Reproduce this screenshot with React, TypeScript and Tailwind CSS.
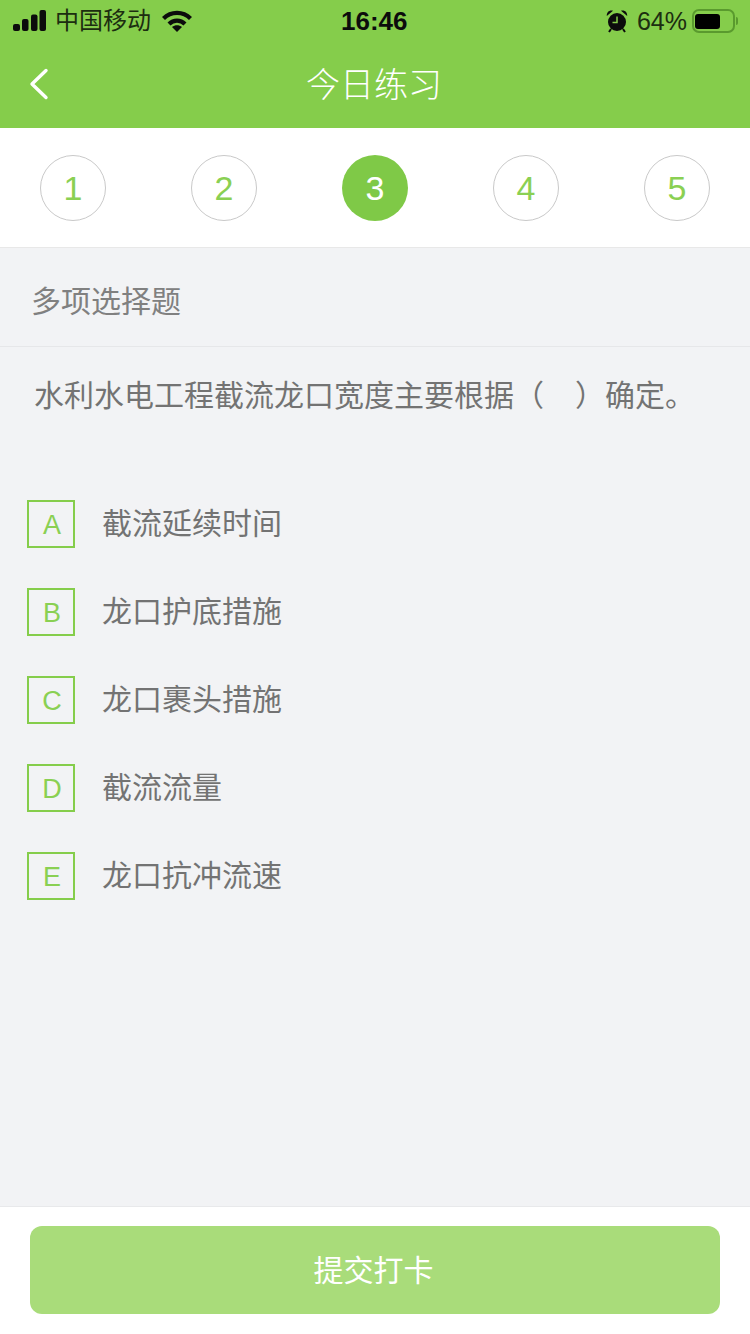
import React from 'react';

const CJK = "font-['Liberation_Sans','Noto_Sans_CJK_SC',sans-serif]";

const steps = [1, 2, 3, 4, 5];

const options = [
    { key: 'A', text: '截流延续时间' },
    { key: 'B', text: '龙口护底措施' },
    { key: 'C', text: '龙口裹头措施' },
    { key: 'D', text: '截流流量' },
    { key: 'E', text: '龙口抗冲流速' },
];

const StatusBar: React.FC = () => (
    <div className="relative flex h-10 items-center justify-between pl-[13px] pr-[12px] pt-[2px] text-black">
        <div className="flex items-center">
            <svg width="34" height="22" viewBox="0 0 34 22" fill="#0c0c0c">
                <rect x="0" y="14" width="7" height="7" rx="2" />
                <rect x="9" y="9" width="6.5" height="12" rx="2" />
                <rect x="18" y="4.5" width="6.5" height="16.5" rx="2" />
                <rect x="26.5" y="0" width="6.5" height="21" rx="2" />
            </svg>
            <span className="ml-[8px] text-[24px] leading-none text-[#1c2e10]">中国移动</span>
            <svg className="ml-[11px]" width="30" height="22" viewBox="0 0 30 22" fill="none" stroke="#0c0c0c" strokeWidth="4.2">
                <path d="M1.5 8.5 C9 1 21 1 28.5 8.5" />
                <path d="M7 14 C11.5 9.5 18.5 9.5 23 14" />
                <path d="M15 22 L10 17 C13 14.8 17 14.8 20 17 Z" fill="#0c0c0c" stroke="none" />
            </svg>
        </div>
        <span className="absolute left-[341px] top-[6px] text-[26px] font-semibold leading-[30px] text-[#0c0c0c]">16:46</span>
        <div className="flex items-center">
            <svg width="22" height="24" viewBox="0 0 22 24">
                <circle cx="11" cy="13" r="9" fill="#0c0c0c" />
                <path d="M11 7.5 V13.5 H6.5" fill="none" stroke="#85cd4b" strokeWidth="1.5" />
                <path d="M0.8 7 C0.6 3 3.5 0.8 7 1.8 Z M21.2 7 C21.4 3 18.5 0.8 15 1.8 Z" fill="#0c0c0c" />
                <path d="M5 20 L3 23 M17 20 L19 23" stroke="#0c0c0c" strokeWidth="2" />
            </svg>
            <span className="ml-[9px] text-[25px] leading-none text-[#1c2e10]">64%</span>
            <div className="ml-[5px] flex h-[24px] w-[43px] items-center rounded-[7px] border-2 border-[#5a9a2e] p-[1px]">
                <div className="h-[15px] w-[25px] rounded-[3px] bg-black" />
            </div>
            <div className="ml-[1px] h-[8px] w-[2px] rounded-r-sm bg-[#5a9a2e]" />
        </div>
    </div>
);

const App: React.FC = () => {
    return (
        <div className={`flex h-[1334px] w-[750px] flex-col overflow-hidden bg-[#f2f3f5] ${CJK}`}>
            <header className="h-32 bg-[#85cd4b]">
                <StatusBar />
                <div className="relative flex h-[88px] items-center justify-center pt-[2px]">
                    <svg className="absolute left-[28px] top-[28px]" width="22" height="32" viewBox="0 0 22 32" fill="none" stroke="#ffffff" strokeWidth="3.4" strokeLinecap="round" strokeLinejoin="round">
                        <path d="M18 2.5 L4 16 L18 29.5" />
                    </svg>
                    <h1 className="pr-[2px] text-[34px] font-light leading-none text-white">今日练习</h1>
                </div>
            </header>

            <div className="flex h-[120px] items-start justify-between border-b border-[#e8e8e8] bg-white px-10 pt-[27px]">
                {steps.map((n) =>
                    n === 3 ? (
                        <div key={n} className="flex h-[66px] w-[66px] items-center justify-center rounded-full bg-[#7fc947] text-[34px] text-white">
                            {n}
                        </div>
                    ) : (
                        <div key={n} className="flex h-[66px] w-[66px] items-center justify-center rounded-full border border-[#c9c9c9] text-[34px] text-[#8ad053]">
                            {n}
                        </div>
                    ),
                )}
            </div>

            <div className="flex h-[99px] items-center border-b border-[#e6e7e9] pl-[31px] pt-[10px] text-[30px] leading-none text-[#808080]">
                多项选择题
            </div>

            <p className="pl-[34px] pt-[31px] text-[30px] leading-[36px] text-[#737373]">
                水利水电工程截流龙口宽度主要根据（<span className="inline-block w-[31px]" />）确定。
            </p>

            <ul className="flex flex-1 flex-col gap-10 pl-[27px] pt-[86px]">
                {options.map((o) => (
                    <li key={o.key} className="flex items-center">
                        <div className="flex h-12 w-12 items-center justify-center border-2 border-[#85cd4b] pl-[2px] pt-[2px] text-[27px] text-[#8ad053]">
                            {o.key}
                        </div>
                        <span className="ml-[27px] text-[30px] leading-none text-[#737373]">{o.text}</span>
                    </li>
                ))}
            </ul>

            <footer className="h-32 border-t border-[#e8e9eb] bg-white px-[30px] pt-[19px]">
                <button className="flex h-[88px] w-full items-center justify-center rounded-xl bg-[#a9dc7a] pr-[3px] text-[30px] text-white">
                    提交打卡
                </button>
            </footer>
        </div>
    );
};

export default App;
